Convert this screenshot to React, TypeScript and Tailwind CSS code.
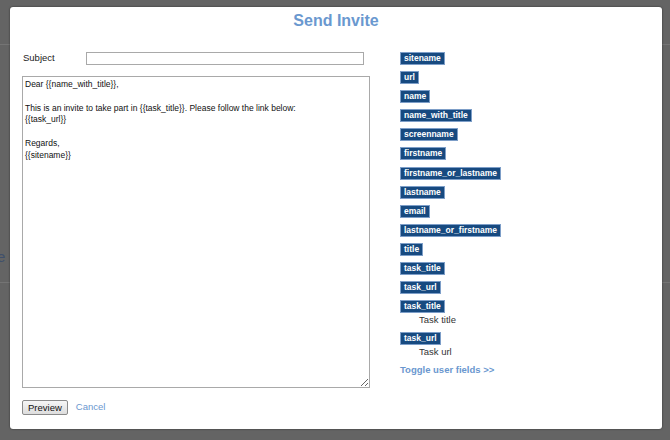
import React from "react";

const FONT = { fontFamily: '"Liberation Sans", Arial, sans-serif' };

const TAGS: { name: string; desc?: string }[] = [
  { name: "sitename" },
  { name: "url" },
  { name: "name" },
  { name: "name_with_title" },
  { name: "screenname" },
  { name: "firstname" },
  { name: "firstname_or_lastname" },
  { name: "lastname" },
  { name: "email" },
  { name: "lastname_or_firstname" },
  { name: "title" },
  { name: "task_title" },
  { name: "task_url" },
  { name: "task_title", desc: "Task title" },
  { name: "task_url", desc: "Task url" },
];

const BODY = `Dear {{name_with_title}},

This is an invite to take part in {{task_title}}. Please follow the link below:
{{task_url}}

Regards,
{{sitename}}`;

function Tag({ name, desc }: { name: string; desc?: string }) {
  return (
    <div className="mb-[6.1px] flex flex-col items-start">
      <span className="h-[13px] border border-[#7d9ec8] bg-[#174a80] px-[3px] text-[8.5px] font-bold leading-[11px] text-white">
        {name}
      </span>
      {desc && <p className="pl-[19px] text-[9.5px] leading-[13px] text-[#333]">{desc}</p>}
    </div>
  );
}

export default function App() {
  return (
    <div className="relative h-[440px] w-[670px] overflow-hidden bg-[#646464]" style={FONT}>
      {/* page behind the overlay */}
      <div className="h-[45px] border-b border-[#747474]" />
      <div className="h-[238px] border-b border-[#747474] pt-[200px]">
        <span className="-ml-[3px] text-[15px] leading-[20px] text-[#40506b]">e</span>
      </div>

      {/* dialog */}
      <div className="absolute left-[10px] top-[7px] h-[422px] w-[652px] rounded-[3px] bg-white shadow-[0_0_2px_rgba(0,0,0,0.6)]">
        <h1 className="h-[45px] pt-[5px] text-center text-[16px] font-bold leading-[18px] text-[#6a98cf]">
          Send Invite
        </h1>

        <div className="flex gap-[30px] pl-[12px]">
          <div className="flex w-[348px] flex-col">
            <div className="flex h-[13px] items-center">
              <label className="w-[64px] pl-[1px] text-[9.5px] text-[#222]">Subject</label>
              <input className="h-[13px] w-[278px] border border-[#a9a9a9] bg-white outline-none" />
            </div>

            <textarea
              readOnly
              defaultValue={BODY}
              className="mt-[11px] h-[312px] w-[348px] resize border border-[#a9a9a9] px-[2px] pt-[2px] text-[8.5px] leading-[11.8px] text-[#111] outline-none"
              style={FONT}
            />

            <div className="mt-[12px] flex items-center gap-[8px]">
              <button
                className="h-[15px] rounded-[2px] border border-[#8a8a8a] bg-gradient-to-b from-[#f6f6f6] to-[#dddddd] px-[5px] text-[9.5px] leading-[12px] text-[#111]"
                style={FONT}
              >
                Preview
              </button>
              <a className="text-[9.5px] text-[#6a97cf]">Cancel</a>
            </div>
          </div>

          <div className="flex flex-col items-start">
            {TAGS.map((t, i) => (
              <Tag key={i} name={t.name} desc={t.desc} />
            ))}
            <a className="text-[9.5px] font-bold leading-[12px] text-[#6a97cf]">Toggle user fields &gt;&gt;</a>
          </div>
        </div>
      </div>
    </div>
  );
}
